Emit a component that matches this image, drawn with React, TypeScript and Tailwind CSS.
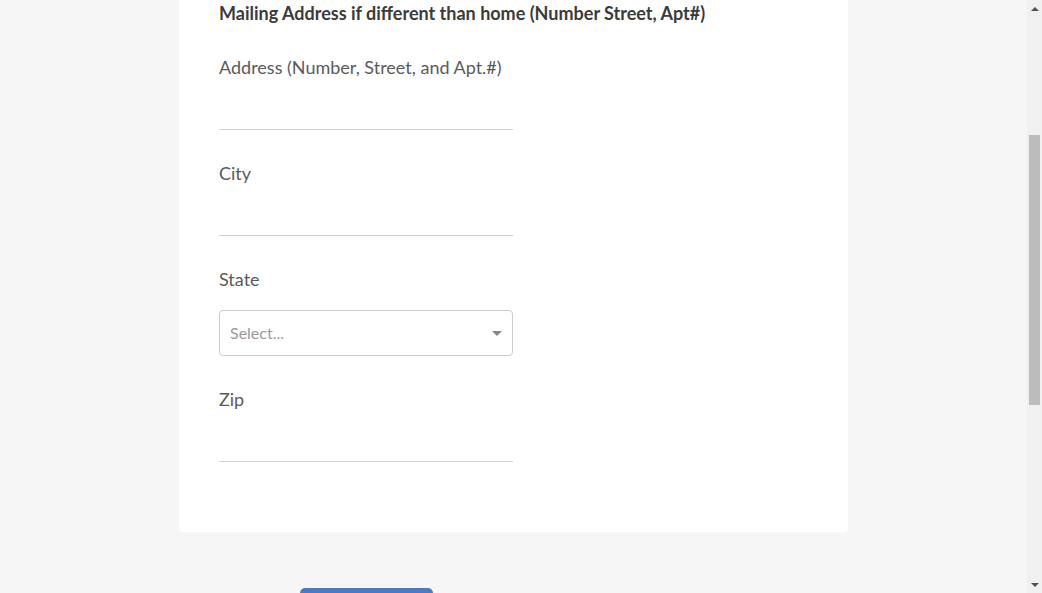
function Field({ label }: { label: string }) {
  return (
    <div className="flex flex-col">
      <label className="text-[18px] leading-6 text-[#5b5b5b]">{label}</label>
      <input
        type="text"
        className="mt-[26px] h-[25px] w-[294px] border-b border-[#cfcfcf] bg-transparent outline-none"
      />
    </div>
  );
}

function Scrollbar() {
  return (
    <div className="flex w-[15px] shrink-0 flex-col items-center bg-[#f0f0f0]">
      <div className="flex h-[17px] items-center justify-center">
        <div className="h-0 w-0 border-x-[4px] border-b-[4px] border-x-transparent border-b-[#505050]" />
      </div>
      <div className="mt-[118px] h-[270px] w-[11px] bg-[#bcbcbc]" />
      <div className="flex-1" />
      <div className="flex h-[17px] items-center justify-center">
        <div className="h-0 w-0 border-x-[4px] border-t-[4px] border-x-transparent border-t-[#505050]" />
      </div>
    </div>
  );
}

export default function App() {
  return (
    <div className="flex h-[593px] w-full overflow-hidden bg-[#f6f6f6] font-['Lato','Open_Sans',sans-serif]">
      <main className="flex flex-1 flex-col items-center">
        <section className="w-[669px] shrink-0 rounded-b-[4px] bg-white px-10 pb-[70px] pt-[1px]">
          <h2 className="text-[18px] font-bold leading-6 text-[#3b3b3b]">
            Mailing Address if different than home (Number Street, Apt#)
          </h2>
          <div className="mt-[30px] flex flex-col gap-[31px]">
            <Field label="Address (Number, Street, and Apt.#)" />
            <Field label="City" />
            <div className="flex flex-col">
              <label className="text-[18px] leading-6 text-[#5b5b5b]">State</label>
              <button className="mt-[19px] flex h-[46px] w-[294px] items-center justify-between rounded-[4px] border border-[#cccccc] px-[10px] text-left">
                <span className="text-[16px] text-[#9a9a9a]">Select...</span>
                <div className="h-0 w-0 border-x-[5px] border-t-[5px] border-x-transparent border-t-[#888888]" />
              </button>
            </div>
            <Field label="Zip" />
          </div>
        </section>
        <div className="mt-[56px] flex w-[669px] shrink-0">
          <button
            aria-label="Submit"
            className="ml-[121px] h-[30px] w-[133px] rounded-t-[5px] bg-[#4a7ac6]"
          />
        </div>
      </main>
      <Scrollbar />
    </div>
  );
}
